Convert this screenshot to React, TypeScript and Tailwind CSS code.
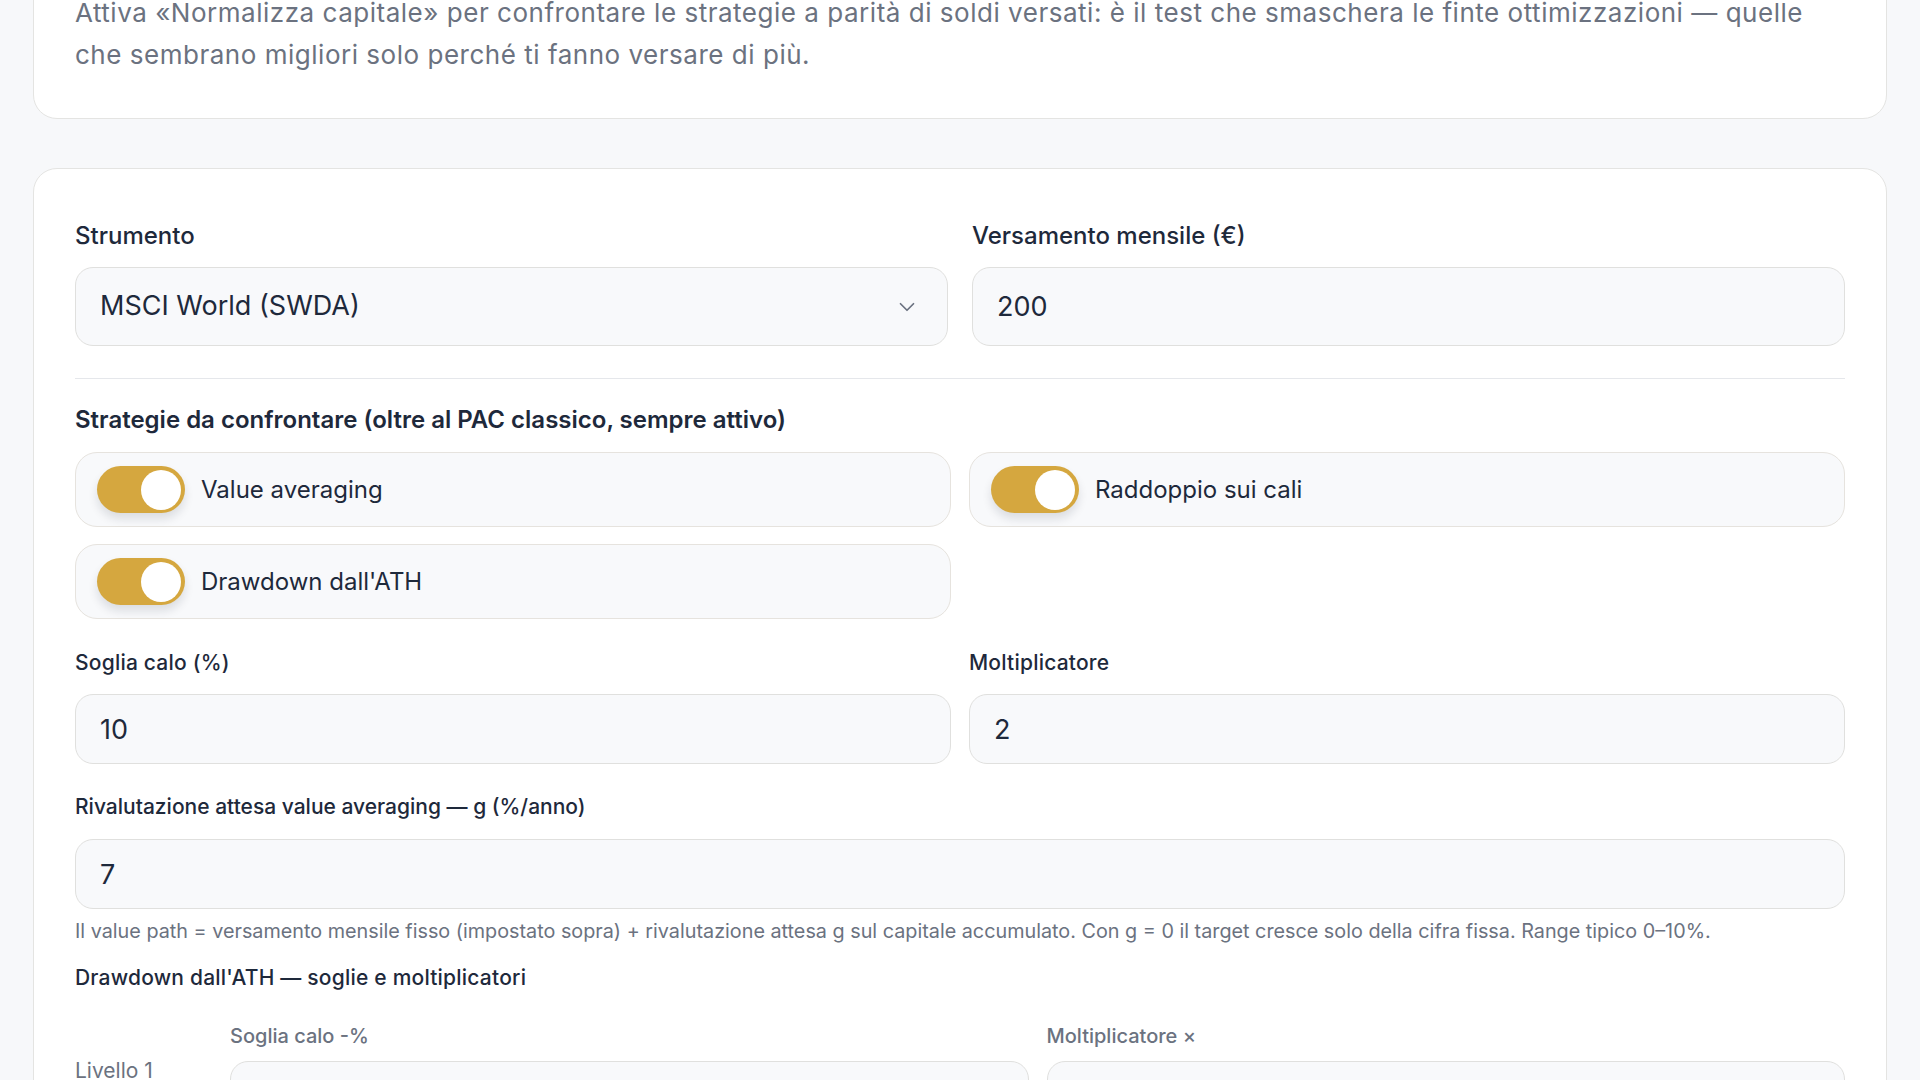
import { useState } from 'react';
import { ChevronDown } from 'lucide-react';

type Strategy = { id: string; label: string };

const STRATEGIES: Strategy[] = [
  { id: 'va', label: 'Value averaging' },
  { id: 'dip', label: 'Raddoppio sui cali' },
  { id: 'ath', label: "Drawdown dall'ATH" },
];

const FONT = "font-['Inter','Noto_Sans',sans-serif]";

function Label({ children, className = '' }: { children: React.ReactNode; className?: string }) {
  return <p className={`text-[21px] leading-[30px] font-medium tracking-[0.01em] text-[#1e293b] ${className}`}>{children}</p>;
}

function TextInput({ value, className = '' }: { value?: string; className?: string }) {
  return (
    <input
      defaultValue={value}
      className={`w-full h-[70px] px-[24px] rounded-[18px] border border-[#e0e0de] bg-[#f8f9fb] text-[27px] text-[#1e293b] outline-none ${className}`}
    />
  );
}

function Toggle({ on, onClick }: { on: boolean; onClick: () => void }) {
  return (
    <button
      type="button"
      onClick={onClick}
      className={`relative w-[88px] h-[47px] shrink-0 rounded-full shadow-[0_6px_10px_rgba(15,23,42,0.12)] transition ${on ? 'bg-[#d5a73f]' : 'bg-[#d1d5db]'}`}
    >
      <span
        className={`absolute top-[3.5px] w-[40px] h-[40px] rounded-full bg-white transition-all ${on ? 'left-[44px]' : 'left-[4px]'}`}
      />
    </button>
  );
}

export default function App() {
  const [enabled, setEnabled] = useState<Record<string, boolean>>({ va: true, dip: true, ath: true });

  return (
    <div className={`min-h-screen bg-[#f7f8fa] px-[33px] ${FONT}`}>
      {/* Intro card, scrolled partly out of view */}
      <div className="-mt-[50px] rounded-[24px] border border-[#e4e4e2] bg-white px-[41px] pt-[41px] pb-[42px]">
        <p className="text-[26px] leading-[42px] text-[#6b7280] tracking-[0.02em]">
          Attiva «Normalizza capitale» per confrontare le strategie a parità di soldi versati: è il test che smaschera le finte ottimizzazioni — quelle che sembrano migliori solo perché ti fanno versare di più.
        </p>
      </div>

      {/* Settings card */}
      <div className="mt-[49px] rounded-[24px] border border-[#e4e4e2] bg-white px-[41px] pt-[52px] pb-[60px]">
        <div className="grid grid-cols-2 gap-x-[24px]">
          <div>
            <Label className="text-[24px] tracking-normal">Strumento</Label>
            <div className="relative mt-[16px]">
              <select className="w-full h-[79px] appearance-none px-[24px] rounded-[18px] border border-[#e0e0de] bg-[#f8f9fb] text-[27px] text-[#1e293b] outline-none">
                <option>MSCI World (SWDA)</option>
                <option>S&P 500 (CSPX)</option>
              </select>
              <ChevronDown className="pointer-events-none absolute right-[28px] top-1/2 -translate-y-1/2 w-[26px] h-[26px] text-[#6b7280]" strokeWidth={1.6} />
            </div>
          </div>
          <div>
            <Label className="text-[24px] tracking-normal">Versamento mensile (€)</Label>
            <TextInput value="200" className="mt-[16px] h-[79px]" />
          </div>
        </div>

        <div className="mt-[32px] border-t border-[#e5e7eb]" />

        <p className="mt-[26px] text-[24px] leading-[30px] font-semibold text-[#1e293b]">
          Strategie da confrontare (oltre al PAC classico, sempre attivo)
        </p>

        <div className="mt-[17px] grid grid-cols-2 gap-x-[18px] gap-y-[17px]">
          {STRATEGIES.map(s => (
            <div
              key={s.id}
              className="flex items-center gap-[16px] h-[75px] px-[21px] rounded-[22px] border border-[#e6e3de] bg-[#f8f9fb]"
            >
              <Toggle on={enabled[s.id]} onClick={() => setEnabled(e => ({ ...e, [s.id]: !e[s.id] }))} />
              <span className="text-[24px] text-[#1e293b]">{s.label}</span>
            </div>
          ))}
        </div>

        <div className="mt-[29px] grid grid-cols-2 gap-x-[18px]">
          <div>
            <Label>Soglia calo (%)</Label>
            <TextInput value="10" className="mt-[16px]" />
          </div>
          <div>
            <Label>Moltiplicatore</Label>
            <TextInput value="2" className="mt-[16px]" />
          </div>
        </div>

        <Label className="mt-[28px] tracking-normal">Rivalutazione attesa value averaging — g (%/anno)</Label>
        <TextInput value="7" className="mt-[17px]" />
        <p className="mt-[9px] text-[19.8px] leading-[27px] text-[#6b7280]">
          Il value path = versamento mensile fisso (impostato sopra) + rivalutazione attesa g sul capitale accumulato. Con g = 0 il target cresce solo della cifra fissa. Range tipico 0–10%.
        </p>

        <Label className="mt-[18px]">Drawdown dall'ATH — soglie e moltiplicatori</Label>

        <div className="mt-[30px] grid grid-cols-[137px_1fr_1fr] gap-x-[18px] items-center">
          <span className="pb-[12px] text-[21px] leading-[24px] text-[#6b7280]">Livello 1</span>
          <div>
            <p className="text-[20px] leading-[27px] font-medium text-[#6b7280]">Soglia calo -%</p>
            <TextInput value="10" className="mt-[11px]" />
          </div>
          <div>
            <p className="text-[20px] leading-[27px] font-medium text-[#6b7280]">Moltiplicatore ×</p>
            <TextInput value="1.5" className="mt-[11px]" />
          </div>
        </div>
      </div>
    </div>
  );
}
